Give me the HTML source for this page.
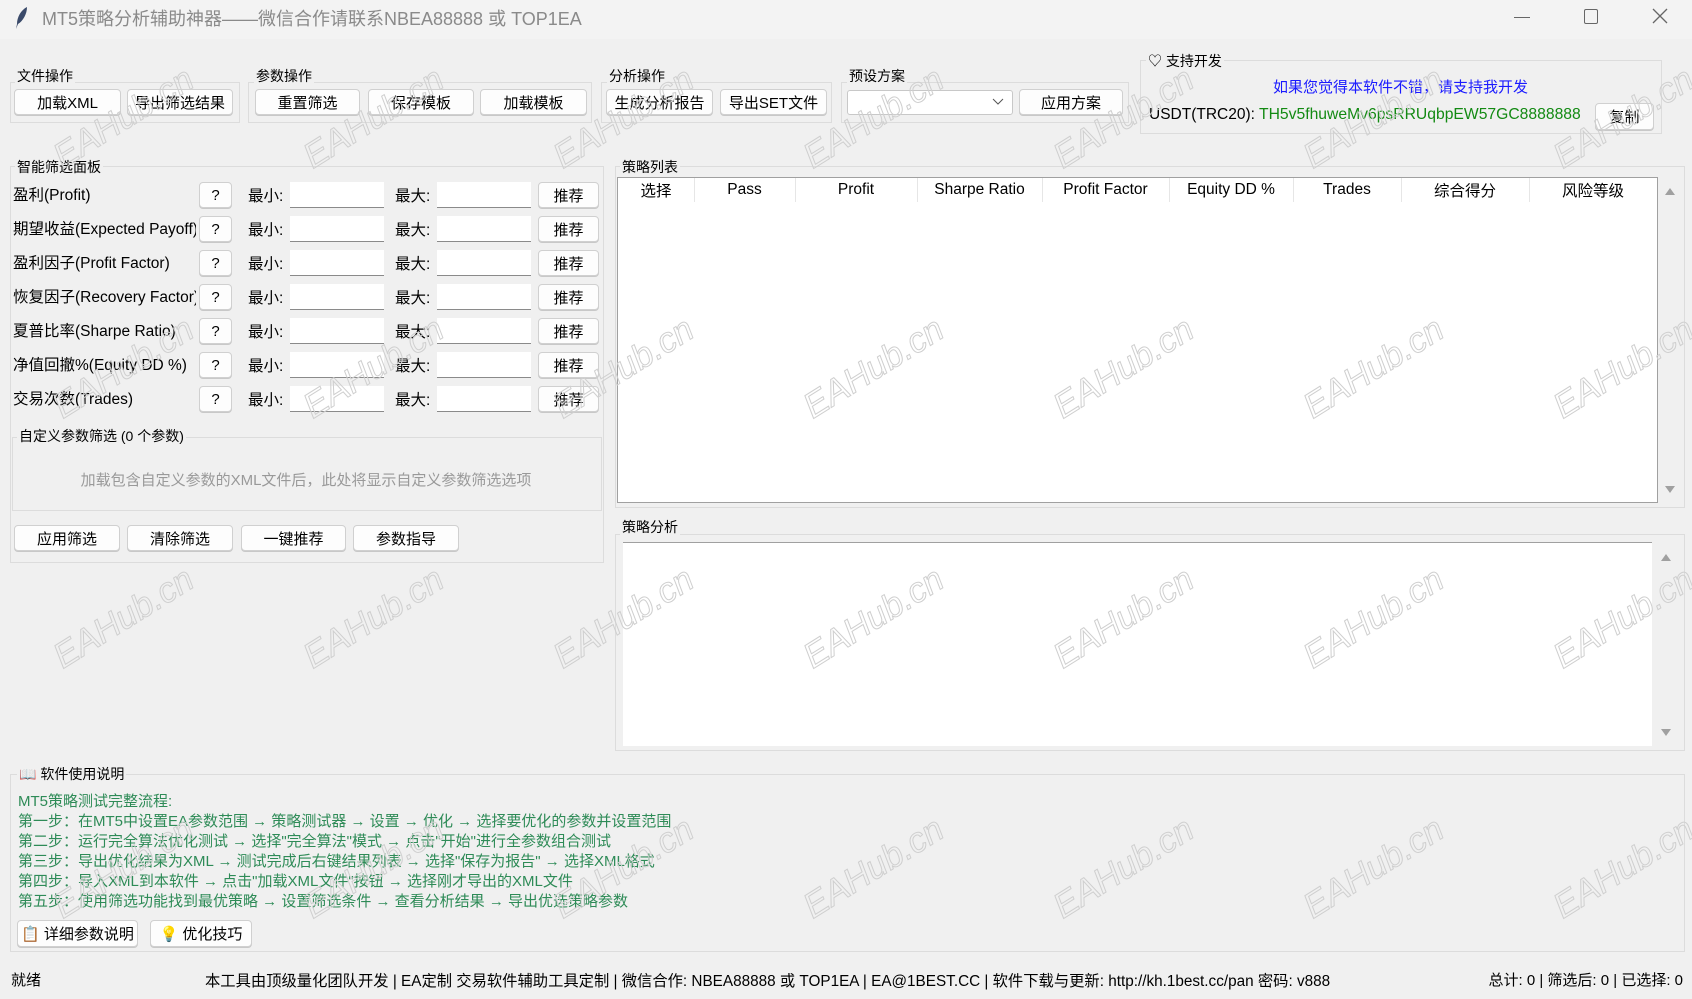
<!DOCTYPE html>
<html><head><meta charset="utf-8">
<style>
*{box-sizing:border-box;margin:0;padding:0}
body{width:1692px;height:999px;background:#f0f0f0;position:relative;overflow:hidden;font-family:"Liberation Sans","Noto Sans CJK SC",sans-serif;font-size:15px;color:#000}
.a{position:absolute;white-space:nowrap}
.btn{position:absolute;background:#fdfdfd;border:1px solid #d0d0d0;border-radius:4px;text-align:center;font-size:15px;display:flex;align-items:center;justify-content:center;box-shadow:0 1px 0 #c8c8c8}
.grp{position:absolute;border:1px solid #dcdcdc}
.lbl{position:absolute;font-size:14px;background:#f0f0f0;padding:0 2px;white-space:nowrap}
.inp{position:absolute;background:#fff;border-bottom:1px solid #8a8a8a;width:94px;height:26px}
.wm{position:absolute;font-size:35px;font-style:italic;color:transparent;-webkit-text-stroke:1px #cfcfcf;transform:rotate(-32deg);white-space:nowrap;pointer-events:none;z-index:50}
.g{color:#2e8b57}
.th{position:absolute;top:190px;font-size:15.5px;text-align:center;transform:translateY(-50%)}
.dv{position:absolute;top:178px;height:24px;border-left:1px solid #e6e6e6}
</style></head><body>
<div class="a" style="left:0;top:0;width:1692px;height:39px;background:#f3f3f3"></div>
<svg class="a" style="left:14px;top:6px" width="16" height="24" viewBox="0 0 16 24"><path d="M13 1C7 4 3 11 3 18L2 23L4 18C9 15 13 8 13 1Z" fill="#3a4a6a"/></svg>
<div class="a" style="left:42px;top:5px;font-size:18px;color:#8a8a8a">MT5策略分析辅助神器——微信合作请联系NBEA88888 或 TOP1EA</div>
<div class="a" style="left:1514px;top:17px;width:16px;border-top:1px solid #666"></div>
<div class="a" style="left:1584px;top:9px;width:14px;height:15px;border:1px solid #666;border-radius:2px"></div>
<svg class="a" style="left:1652px;top:8px" width="16" height="16"><path d="M1 1L15 15M15 1L1 15" stroke="#666" stroke-width="1.3"/></svg>

<div class="grp" style="left:10px;top:82px;width:230px;height:41px"></div><div class="lbl" style="left:15px;top:66px">文件操作</div>
<div class="btn" style="left:14px;top:89px;width:107px;height:26px">加载XML</div>
<div class="btn" style="left:127px;top:89px;width:106px;height:26px">导出筛选结果</div>
<div class="grp" style="left:248px;top:82px;width:344px;height:41px"></div><div class="lbl" style="left:254px;top:66px">参数操作</div>
<div class="btn" style="left:255px;top:89px;width:105px;height:26px">重置筛选</div>
<div class="btn" style="left:368px;top:89px;width:106px;height:26px">保存模板</div>
<div class="btn" style="left:480px;top:89px;width:107px;height:26px">加载模板</div>
<div class="grp" style="left:601px;top:82px;width:231px;height:41px"></div><div class="lbl" style="left:607px;top:66px">分析操作</div>
<div class="btn" style="left:606px;top:89px;width:107px;height:26px">生成分析报告</div>
<div class="btn" style="left:720px;top:89px;width:107px;height:26px">导出SET文件</div>
<div class="grp" style="left:841px;top:82px;width:288px;height:41px"></div><div class="lbl" style="left:847px;top:66px">预设方案</div>
<div class="a" style="left:847px;top:90px;width:166px;height:25px;background:#fff;border:1px solid #c8c8c8;border-radius:3px"></div>
<svg class="a" style="left:992px;top:98px" width="12" height="8"><path d="M1 1L6 6L11 1" stroke="#555" fill="none"/></svg>
<div class="btn" style="left:1019px;top:89px;width:104px;height:26px">应用方案</div>
<div class="grp" style="left:1140px;top:60px;width:522px;height:74px"></div>
<div class="lbl" style="left:1146px;top:51px">♡ 支持开发</div>
<div class="a" style="left:1273px;top:76px;color:#1a1aff;font-size:15px">如果您觉得本软件不错，请支持我开发</div>
<div class="a" style="left:1149px;top:106px;font-size:15.5px">USDT(TRC20):</div>
<div class="a" style="left:1259px;top:106px;font-size:15.7px;color:#138a13">TH5v5fhuweMv6psRRUqbpEW57GC8888888</div>
<div class="btn" style="left:1595px;top:103px;width:59px;height:27px">复制</div>

<div class="grp" style="left:10px;top:166px;width:594px;height:397px"></div><div class="lbl" style="left:15px;top:157px">智能筛选面板</div>
<div class="a" style="left:13px;top:185px;font-size:15.5px;line-height:22px">
<div style="height:34px">盈利(Profit)</div><div style="height:34px;width:183px;overflow:hidden">期望收益(Expected Payoff)</div><div style="height:34px">盈利因子(Profit Factor)</div><div style="height:34px;width:183px;overflow:hidden">恢复因子(Recovery Factor)</div><div style="height:34px">夏普比率(Sharpe Ratio)</div><div style="height:34px">净值回撤%(Equity DD %)</div><div style="height:34px">交易次数(Trades)</div></div>
<div id="rows"></div>
<div class="grp" style="left:12px;top:437px;width:590px;height:74px"></div><div class="lbl" style="left:17px;top:426px">自定义参数筛选 (0 个参数)</div>
<div class="a" style="left:306px;top:469px;transform:translateX(-50%);color:#999;font-size:15px">加载包含自定义参数的XML文件后，此处将显示自定义参数筛选选项</div>
<div class="btn" style="left:14px;top:525px;width:106px;height:26px">应用筛选</div>
<div class="btn" style="left:127px;top:525px;width:106px;height:26px">清除筛选</div>
<div class="btn" style="left:241px;top:525px;width:105px;height:26px">一键推荐</div>
<div class="btn" style="left:353px;top:525px;width:106px;height:26px">参数指导</div>

<div class="grp" style="left:615px;top:166px;width:1070px;height:342px"></div><div class="lbl" style="left:620px;top:157px">策略列表</div>
<div class="a" style="left:617px;top:177px;width:1041px;height:326px;background:#fff;border:1px solid #a0a0a0"></div>
<div class="th" style="left:618px;width:76px">选择</div><div class="dv" style="left:694px"></div>
<div class="th" style="left:694px;width:101px">Pass</div><div class="dv" style="left:795px"></div>
<div class="th" style="left:795px;width:122px">Profit</div><div class="dv" style="left:917px"></div>
<div class="th" style="left:917px;width:125px">Sharpe Ratio</div><div class="dv" style="left:1042px"></div>
<div class="th" style="left:1042px;width:127px">Profit Factor</div><div class="dv" style="left:1169px"></div>
<div class="th" style="left:1169px;width:124px">Equity DD %</div><div class="dv" style="left:1293px"></div>
<div class="th" style="left:1293px;width:108px">Trades</div><div class="dv" style="left:1401px"></div>
<div class="th" style="left:1401px;width:128px">综合得分</div><div class="dv" style="left:1529px"></div>
<div class="th" style="left:1529px;width:128px">风险等级</div>
<svg class="a" style="left:1664px;top:186px" width="12" height="10"><path d="M1 9L6 2L11 9Z" fill="#a0a0a0"/></svg>
<svg class="a" style="left:1664px;top:485px" width="12" height="10"><path d="M1 1L6 8L11 1Z" fill="#a0a0a0"/></svg>

<div class="grp" style="left:615px;top:534px;width:1070px;height:217px"></div><div class="lbl" style="left:620px;top:517px">策略分析</div>
<div class="a" style="left:623px;top:542px;width:1029px;height:204px;background:#fff;border-top:1px solid #a0a0a0"></div>
<svg class="a" style="left:1660px;top:552px" width="12" height="10"><path d="M1 9L6 2L11 9Z" fill="#a0a0a0"/></svg>
<svg class="a" style="left:1660px;top:728px" width="12" height="10"><path d="M1 1L6 8L11 1Z" fill="#a0a0a0"/></svg>

<div class="grp" style="left:10px;top:774px;width:1675px;height:178px"></div>
<div class="lbl" style="left:17px;top:764px">📖 软件使用说明</div>
<div class="a g" style="left:18px;top:792px;font-size:15px;line-height:20px">MT5策略测试完整流程:<br>第一步：在MT5中设置EA参数范围 → 策略测试器 → 设置 → 优化 → 选择要优化的参数并设置范围<br>第二步：运行完全算法优化测试 → 选择"完全算法"模式 → 点击"开始"进行全参数组合测试<br>第三步：导出优化结果为XML → 测试完成后右键结果列表 → 选择"保存为报告" → 选择XML格式<br>第四步：导入XML到本软件 → 点击"加载XML文件"按钮 → 选择刚才导出的XML文件<br>第五步：使用筛选功能找到最优策略 → 设置筛选条件 → 查看分析结果 → 导出优选策略参数</div>
<div class="btn" style="left:17px;top:920px;width:121px;height:27px">📋 详细参数说明</div>
<div class="btn" style="left:150px;top:920px;width:102px;height:27px">💡 优化技巧</div>

<div class="a" style="left:11px;top:969px">就绪</div>
<div class="a" style="left:205px;top:969px;font-size:15.3px">本工具由顶级量化团队开发 | EA定制 交易软件辅助工具定制 | 微信合作: NBEA88888 或 TOP1EA | EA@1BEST.CC | 软件下载与更新: http://kh.1best.cc/pan 密码: v888</div>
<div class="a" style="right:9px;top:969px">总计: 0 | 筛选后: 0 | 已选择: 0</div>

<div id="wms"></div>
<script>
var r='';[194,228,262,296,330,364,398].forEach(function(y){
r+='<div class="btn" style="left:199px;top:'+(y-12)+'px;width:33px;height:26px">?</div>';
r+='<div class="a" style="left:248px;top:'+(y-10)+'px;font-size:15.5px">最小:</div>';
r+='<div class="inp" style="left:290px;top:'+(y-12)+'px"></div>';
r+='<div class="a" style="left:395px;top:'+(y-10)+'px;font-size:15.5px">最大:</div>';
r+='<div class="inp" style="left:437px;top:'+(y-12)+'px"></div>';
r+='<div class="btn" style="left:538px;top:'+(y-12)+'px;width:61px;height:26px">推荐</div>';});
document.getElementById('rows').outerHTML=r;
var w='';[118,368,618,868].forEach(function(y){[125,375,625,875,1125,1375,1625].forEach(function(x){
w+='<div class="wm" style="left:'+(x-80)+'px;top:'+(y-20)+'px">EAHub.cn</div>';});});
document.getElementById('wms').outerHTML=w;
</script>
</body></html>
